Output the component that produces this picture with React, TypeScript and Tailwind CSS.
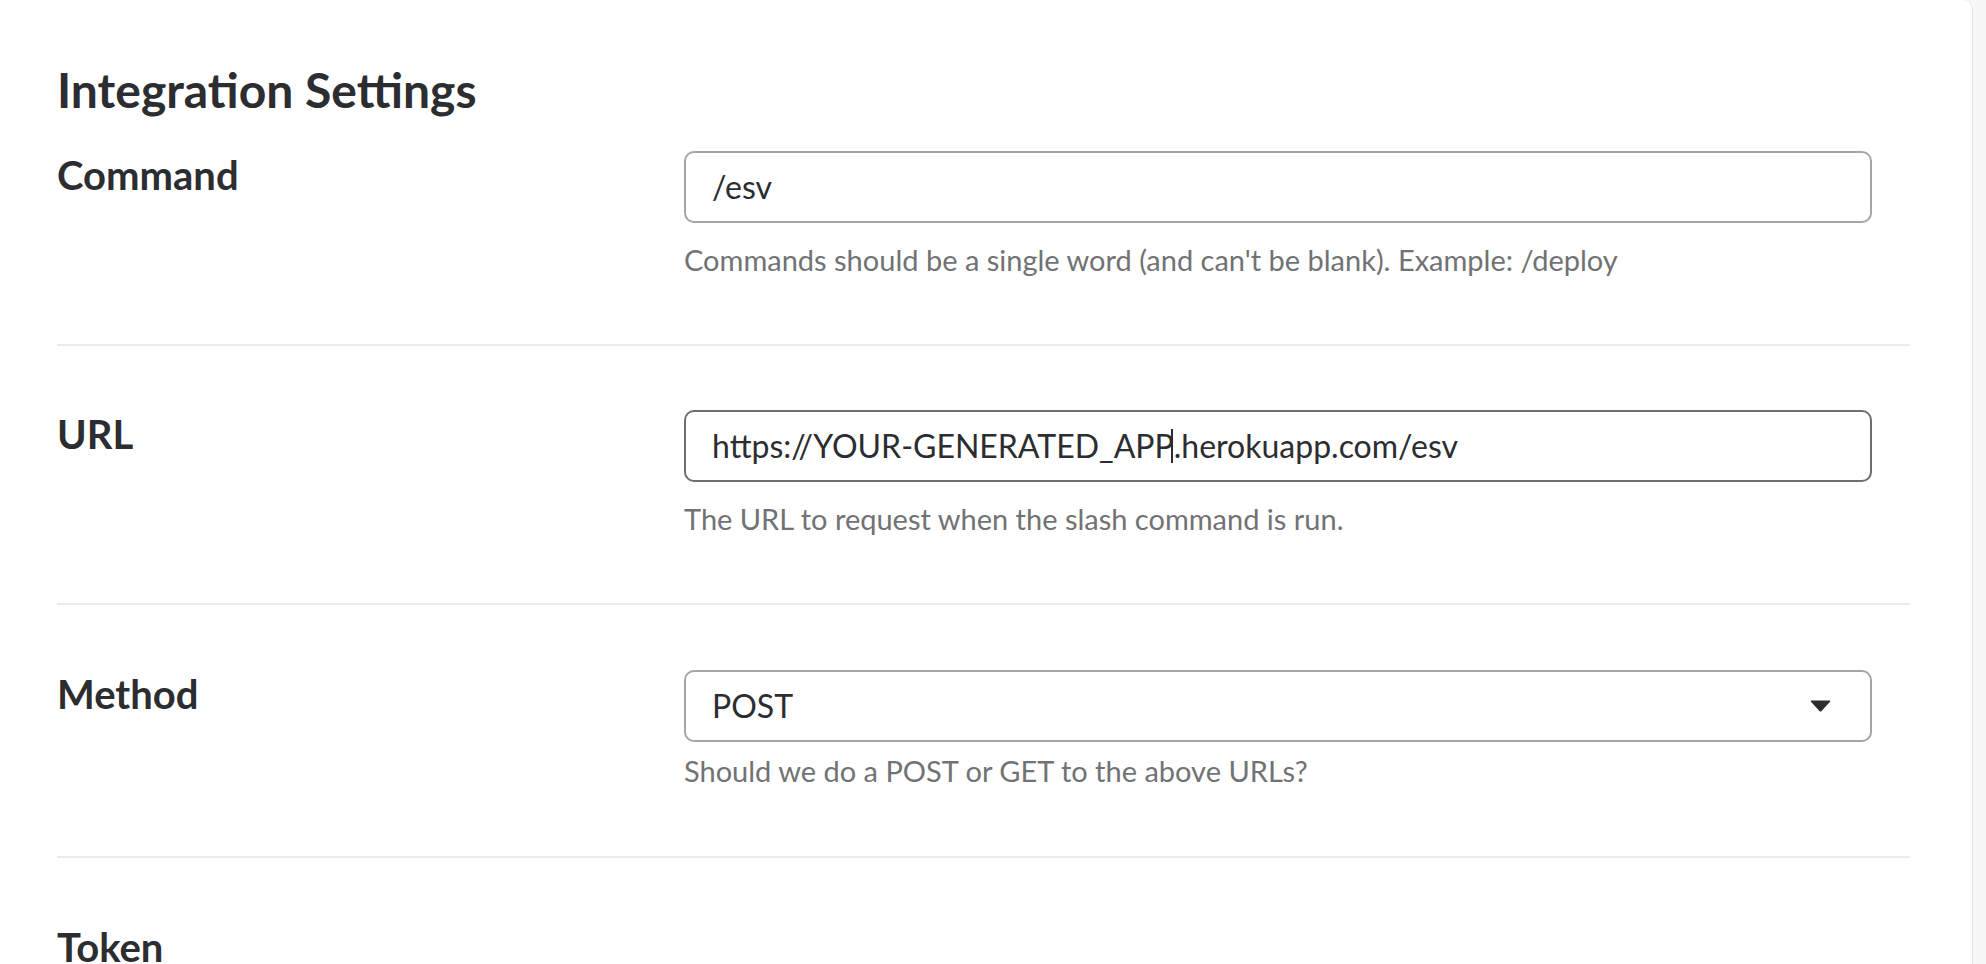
import React from "react";

const Label = ({ children }: { children: React.ReactNode }) => (
  <div className="text-[40px] leading-[1.2] font-bold text-[#2c2d30]">{children}</div>
);

const Help = ({ children, tight }: { children: React.ReactNode; tight?: boolean }) => (
  <p className={`${tight ? "mt-[12px]" : "mt-[20px]"} text-[29px] leading-[1.2] text-[#717274]`}>{children}</p>
);

const App = () => {
  return (
    <div className="min-h-screen w-full bg-[#f7f7f7] flex font-[Lato,'Liberation_Sans',sans-serif]">
      <div className="w-[1973px] min-h-screen bg-white rounded-tr-[10px] border-r border-[#e4e4e4] pl-[57px] pt-[61px]">
        <h2 className="text-[48px] leading-[1.2] font-bold text-[#2c2d30]">Integration Settings</h2>

        {/* Command */}
        <div className="w-[1853px] mt-[32px] pb-[67px] grid grid-cols-[627px_1188px]">
          <Label>Command</Label>
          <div>
            <div className="h-[72px] rounded-[10px] border-2 border-[#a5a5a7] flex items-center pl-[26px] text-[32px] text-[#2c2d30]">
              /esv
            </div>
            <Help>Commands should be a single word (and can't be blank). Example: /deploy</Help>
          </div>
        </div>

        {/* URL */}
        <div className="w-[1853px] border-t-2 border-[#ebebeb] pt-[64px] pb-[66px] grid grid-cols-[627px_1188px]">
          <Label>URL</Label>
          <div>
            <div className="h-[72px] rounded-[10px] border-2 border-[#6e6e70] flex items-center pl-[26px] text-[32px] text-[#2c2d30]">
              <span>https://YOUR-GENERATED_APP</span>
              <span className="inline-block w-[2px] h-[34px] bg-[#2c2d30] ml-[-3px] mr-[1px]" />
              <span>.herokuapp.com/esv</span>
            </div>
            <Help>The URL to request when the slash command is run.</Help>
          </div>
        </div>

        {/* Method */}
        <div className="w-[1853px] border-t-2 border-[#ebebeb] pt-[65px] pb-[67px] grid grid-cols-[627px_1188px]">
          <Label>Method</Label>
          <div>
            <div className="h-[72px] rounded-[10px] border-2 border-[#a5a5a7] flex items-center justify-between pl-[26px] pr-[38px] text-[32px] text-[#2c2d30]">
              <span>POST</span>
              <svg width="23" height="14" viewBox="0 0 23 14">
                <path d="M2.5 1.5 H20.5 Q22 1.5 21 2.8 L12.6 12 Q11.5 13.2 10.4 12 L2 2.8 Q1 1.5 2.5 1.5 Z" fill="#2c2d30" />
              </svg>
            </div>
            <Help tight>Should we do a POST or GET to the above URLs?</Help>
          </div>
        </div>

        {/* Token */}
        <div className="w-[1853px] border-t-2 border-[#ebebeb] pt-[65px] pb-[67px] grid grid-cols-[627px_1188px]">
          <Label>Token</Label>
          <div />
        </div>
      </div>
    </div>
  );
};

export default App;
